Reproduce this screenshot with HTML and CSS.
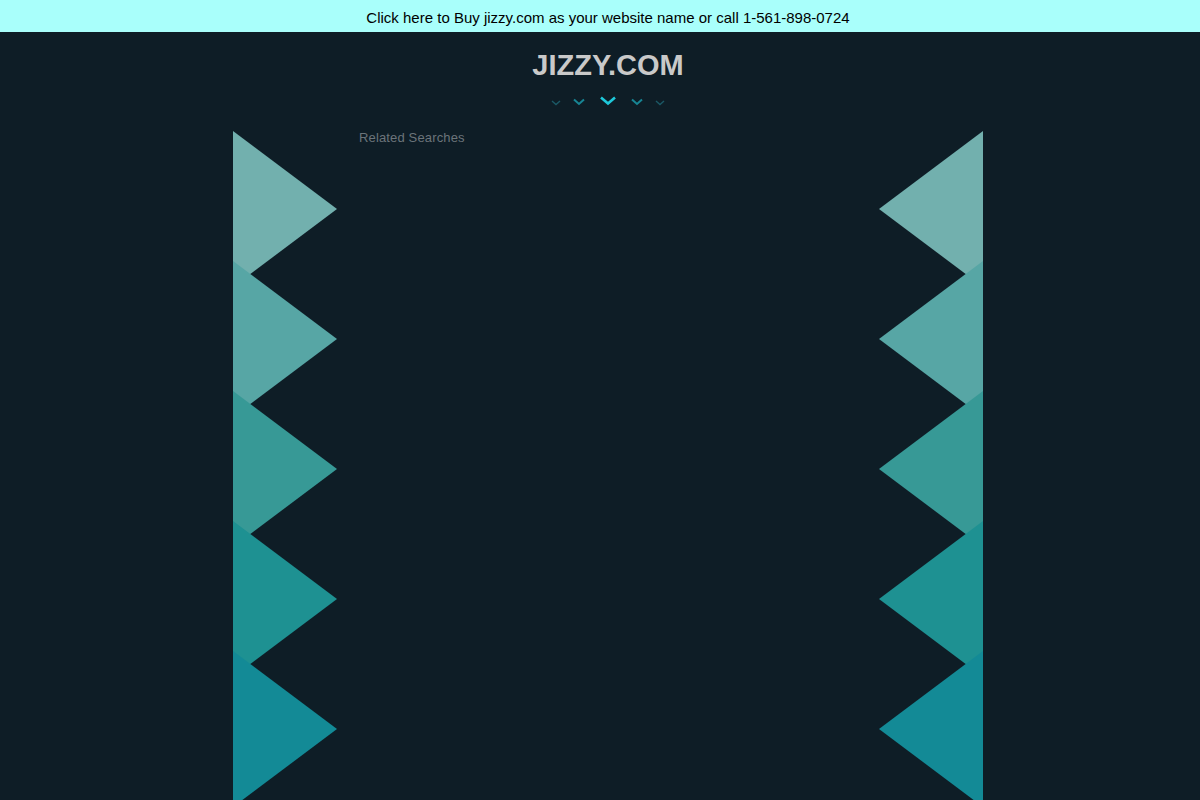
FILE: index.html
```html
<!DOCTYPE html>
<html>
<head>
<meta charset="utf-8">
<link rel="stylesheet" href="styles.css">
</head>
<body>
<div class="topbar"><a class="buy" href="#">Click here to Buy jizzy.com as your website name or call 1-561-898-0724</a></div>
<header class="header">
  <h1 class="title">JIZZY.COM</h1>
  <div class="chevrons">
    <svg width="124" height="14" viewBox="0 0 124 14">
      <polyline points="6,5 10,8.5 14,5" fill="none" stroke="#1b5966" stroke-width="1.4"/>
      <polyline points="28,3.5 33,8 38,3.5" fill="none" stroke="#178594" stroke-width="2"/>
      <polyline points="55,1.5 62,7.5 69,1.5" fill="none" stroke="#1ec8da" stroke-width="2.6"/>
      <polyline points="86,3.5 91,8 96,3.5" fill="none" stroke="#178594" stroke-width="2"/>
      <polyline points="110,5 114,8.5 118,5" fill="none" stroke="#1b5966" stroke-width="1.4"/>
    </svg>
  </div>
</header>
<main class="main">
  <div class="side side-left">
    <svg width="104" height="669" viewBox="0 0 104 669">
      <polygon points="0,0 104,78 0,156" fill="#72b0ae"/>
      <polygon points="0,130 104,208 0,286" fill="#57a6a5"/>
      <polygon points="0,260 104,338 0,416" fill="#379996"/>
      <polygon points="0,390 104,468 0,546" fill="#1e9192"/>
      <polygon points="0,520 104,598 0,676" fill="#138a96"/>
    </svg>
  </div>
  <section class="content">
    <div class="related">Related Searches</div>
  </section>
  <div class="side side-right">
    <svg width="104" height="669" viewBox="0 0 104 669">
      <polygon points="104,0 0,78 104,156" fill="#72b0ae"/>
      <polygon points="104,130 0,208 104,286" fill="#57a6a5"/>
      <polygon points="104,260 0,338 104,416" fill="#379996"/>
      <polygon points="104,390 0,468 104,546" fill="#1e9192"/>
      <polygon points="104,520 0,598 104,676" fill="#138a96"/>
    </svg>
  </div>
</main>
</body>
</html>
```
FILE: styles.css
```css
html, body {
  margin: 0;
  padding: 0;
  height: 100%;
  overflow: hidden;
}
body {
  background: #0e1d26;
  font-family: "Liberation Sans", Arial, sans-serif;
}
.topbar {
  background: #a9fffb;
  height: 32px;
  padding-left: 16px;
  display: flex;
  align-items: center;
  justify-content: center;
}
.buy {
  color: #000;
  text-decoration: none;
  font-size: 15px;
  line-height: 18px;
  padding-top: 4px;
}
.header {
  padding-left: 16px;
  display: flex;
  flex-direction: column;
  align-items: center;
}
.title {
  margin: 15px 0 0 0;
  font-size: 29px;
  line-height: 36px;
  font-weight: bold;
  color: #c9c9c9;
}
.chevrons {
  margin-top: 13px;
  height: 14px;
  line-height: 0;
}
.main {
  padding-left: 16px;
  margin-top: 21px;
  display: flex;
  justify-content: center;
}
.side {
  width: 104px;
  flex: none;
  line-height: 0;
}
.content {
  width: 542px;
  padding: 0 22px;
  box-sizing: border-box;
}
.related {
  color: #6b747a;
  font-size: 13px;
  letter-spacing: 0.15px;
  line-height: 14px;
}
```
